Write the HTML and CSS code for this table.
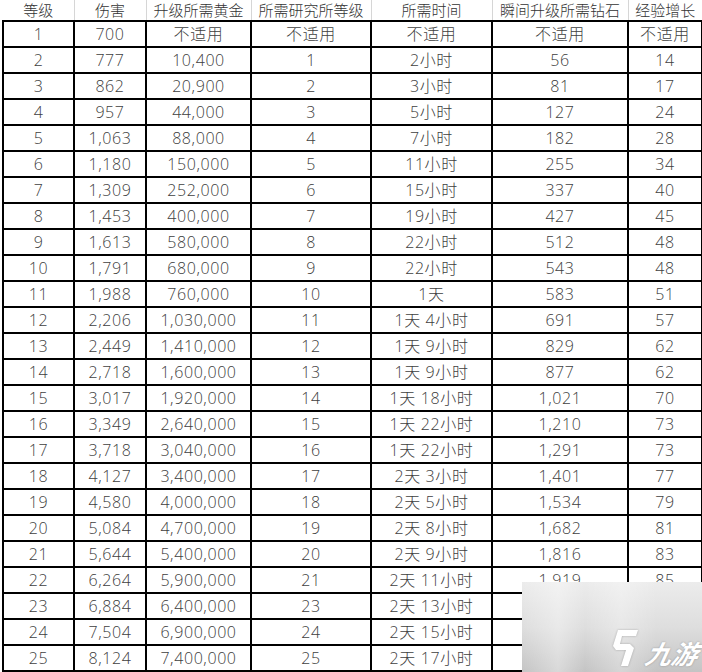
FILE: index.html
```html
<!DOCTYPE html>
<html lang="zh">
<head>
<meta charset="utf-8">
<title>等级表</title>
<link rel="stylesheet" href="styles.css">
</head>
<body>
<div class="page">
<table class="grid">
<colgroup>
<col class="c1"><col class="c2"><col class="c3"><col class="c4"><col class="c5"><col class="c6"><col class="c7">
</colgroup>
<thead>
<tr><th>等级</th><th>伤害</th><th>升级所需黄金</th><th>所需研究所等级</th><th>所需时间</th><th>瞬间升级所需钻石</th><th>经验增长</th></tr>
</thead>
<tbody>
<tr><td>1</td><td>700</td><td>不适用</td><td>不适用</td><td>不适用</td><td>不适用</td><td>不适用</td></tr>
<tr><td>2</td><td>777</td><td>10,400</td><td>1</td><td>2小时</td><td>56</td><td>14</td></tr>
<tr><td>3</td><td>862</td><td>20,900</td><td>2</td><td>3小时</td><td>81</td><td>17</td></tr>
<tr><td>4</td><td>957</td><td>44,000</td><td>3</td><td>5小时</td><td>127</td><td>24</td></tr>
<tr><td>5</td><td>1,063</td><td>88,000</td><td>4</td><td>7小时</td><td>182</td><td>28</td></tr>
<tr><td>6</td><td>1,180</td><td>150,000</td><td>5</td><td>11小时</td><td>255</td><td>34</td></tr>
<tr><td>7</td><td>1,309</td><td>252,000</td><td>6</td><td>15小时</td><td>337</td><td>40</td></tr>
<tr><td>8</td><td>1,453</td><td>400,000</td><td>7</td><td>19小时</td><td>427</td><td>45</td></tr>
<tr><td>9</td><td>1,613</td><td>580,000</td><td>8</td><td>22小时</td><td>512</td><td>48</td></tr>
<tr><td>10</td><td>1,791</td><td>680,000</td><td>9</td><td>22小时</td><td>543</td><td>48</td></tr>
<tr><td>11</td><td>1,988</td><td>760,000</td><td>10</td><td>1天</td><td>583</td><td>51</td></tr>
<tr><td>12</td><td>2,206</td><td>1,030,000</td><td>11</td><td>1天 4小时</td><td>691</td><td>57</td></tr>
<tr><td>13</td><td>2,449</td><td>1,410,000</td><td>12</td><td>1天 9小时</td><td>829</td><td>62</td></tr>
<tr><td>14</td><td>2,718</td><td>1,600,000</td><td>13</td><td>1天 9小时</td><td>877</td><td>62</td></tr>
<tr><td>15</td><td>3,017</td><td>1,920,000</td><td>14</td><td>1天 18小时</td><td>1,021</td><td>70</td></tr>
<tr><td>16</td><td>3,349</td><td>2,640,000</td><td>15</td><td>1天 22小时</td><td>1,210</td><td>73</td></tr>
<tr><td>17</td><td>3,718</td><td>3,040,000</td><td>16</td><td>1天 22小时</td><td>1,291</td><td>73</td></tr>
<tr><td>18</td><td>4,127</td><td>3,400,000</td><td>17</td><td>2天 3小时</td><td>1,401</td><td>77</td></tr>
<tr><td>19</td><td>4,580</td><td>4,000,000</td><td>18</td><td>2天 5小时</td><td>1,534</td><td>79</td></tr>
<tr><td>20</td><td>5,084</td><td>4,700,000</td><td>19</td><td>2天 8小时</td><td>1,682</td><td>81</td></tr>
<tr><td>21</td><td>5,644</td><td>5,400,000</td><td>20</td><td>2天 9小时</td><td>1,816</td><td>83</td></tr>
<tr><td>22</td><td>6,264</td><td>5,900,000</td><td>21</td><td>2天 11小时</td><td>1,919</td><td>85</td></tr>
<tr><td>23</td><td>6,884</td><td>6,400,000</td><td>23</td><td>2天 13小时</td><td></td><td></td></tr>
<tr><td>24</td><td>7,504</td><td>6,900,000</td><td>24</td><td>2天 15小时</td><td></td><td></td></tr>
<tr><td>25</td><td>8,124</td><td>7,400,000</td><td>25</td><td>2天 17小时</td><td></td><td></td></tr>
</tbody>
</table>
<div class="watermark">
<svg class="wm-icon" viewBox="0 0 30 40" width="30" height="40">
<path d="M8 2 L28 2 L26 8 L12 8 L10 16 L20 16 L24 20 L18 38 L11 38 L16 22 L6 22 L3 18 Z" fill="#ffffff"/>
</svg>
<span class="wm-text">九游</span>
</div>
</div>
</body>
</html>
```
FILE: styles.css
```css
html, body {
  margin: 0;
  padding: 0;
  background: #ffffff;
}
.page {
  position: relative;
  width: 702px;
  height: 672px;
  overflow: hidden;
}
.grid {
  border-collapse: collapse;
  table-layout: fixed;
  margin-left: 2px;
  width: 699px;
  font-family: "Open Sans", "Noto Sans CJK SC", sans-serif;
  font-weight: 300;
  font-size: 16px;
  letter-spacing: 0.6px;
  color: #404040;
}
.c1 { width: 71px; }
.c2 { width: 72px; }
.c3 { width: 105px; }
.c4 { width: 120px; }
.c5 { width: 121px; }
.c6 { width: 136px; }
.c7 { width: 74px; }
.grid th {
  height: 20px;
  padding: 0;
  font-weight: 300;
  font-size: 15px;
  letter-spacing: 0;
  line-height: 20px;
  color: #333333;
  border: 1px solid #d6d6d6;
  border-top: none;
  text-align: center;
}
.grid th:first-child { border-left: none; }
.grid th:last-child { border-right: none; }
.grid td {
  height: 24px;
  padding: 0;
  line-height: 24px;
  text-align: center;
  border: 2px solid #000000;
  white-space: nowrap;
}
.watermark {
  position: absolute;
  left: 522px;
  top: 582px;
  width: 180px;
  height: 90px;
  background:
    linear-gradient(90deg, rgba(255,255,255,0) 0%, rgba(255,255,255,0.35) 20%, rgba(255,255,255,0) 35%, rgba(255,255,255,0.3) 55%, rgba(255,255,255,0) 75%),
    linear-gradient(180deg, #ececec 0%, #dedede 50%, #c4c4c4 100%);
  display: flex;
  align-items: flex-end;
  justify-content: flex-end;
  gap: 6px;
  padding: 0 4px 4px 0;
  box-sizing: border-box;
}
.wm-icon {
  display: block;
  filter: drop-shadow(0 0 1px rgba(0,0,0,0.25));
}
.wm-text {
  font-family: "Noto Sans CJK SC", sans-serif;
  font-weight: 700;
  font-style: italic;
  font-size: 26px;
  line-height: 30px;
  color: #ffffff;
  text-shadow: 0 0 2px rgba(0,0,0,0.3);
  transform: skewX(-12deg);
}
```
